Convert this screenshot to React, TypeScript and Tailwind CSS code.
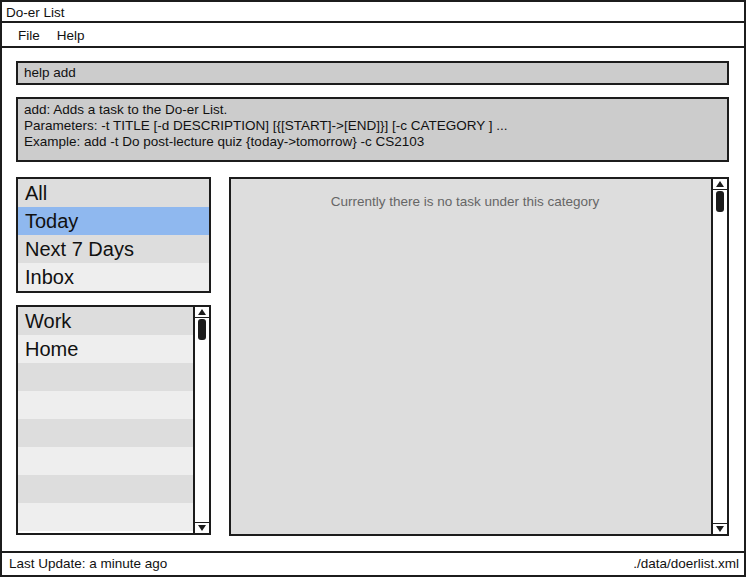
import React from "react";

const font = { fontFamily: '"Liberation Sans", Arial, sans-serif' };

function ScrollBar({ className = "" }: { className?: string }) {
  return (
    <div className={`flex w-[16px] flex-col border-l-2 border-[#1c1c1c] bg-white ${className}`}>
      {/* up arrow */}
      <div className="flex h-[11px] items-center justify-center border-b border-[#1c1c1c]">
        <svg width="8" height="6" viewBox="0 0 8 6">
          <polygon points="4,0 8,6 0,6" fill="#1c1c1c" />
        </svg>
      </div>
      {/* thumb */}
      <div className="mx-auto mt-[1px] h-[21px] w-[8px] rounded-[3px] bg-[#1c1c1c]" />
      <div className="flex-1" />
      {/* down arrow */}
      <div className="flex h-[11px] items-center justify-center border-t border-[#1c1c1c]">
        <svg width="8" height="6" viewBox="0 0 8 6">
          <polygon points="0,0 8,0 4,6" fill="#1c1c1c" />
        </svg>
      </div>
    </div>
  );
}

export default function App() {
  const filters = ["All", "Today", "Next 7 Days", "Inbox"];
  const categories = ["Work", "Home", "", "", "", "", "", ""];

  return (
    <div
      className="flex h-[577px] w-[746px] flex-col overflow-hidden border-2 border-[#1c1c1c] bg-white text-[#111]"
      style={font}
    >
      {/* Title */}
      <div className="h-[21px] border-b-2 border-[#1c1c1c] pl-[4px] pt-[2px] text-[13.5px] leading-[17px]">
        Do-er List
      </div>

      {/* Menu */}
      <div className="flex h-[25px] items-center gap-[17px] border-b-2 border-[#1c1c1c] pl-[16px] pt-[3px] text-[13.5px]">
        <span>File</span>
        <span>Help</span>
      </div>

      {/* Content */}
      <div className="flex flex-1 flex-col pl-[14px] pr-[15px] pt-[13px]">
        <div className="flex h-[24px] items-center border-2 border-[#1c1c1c] bg-[#cccccc] pl-[6px] text-[13.5px]">
          help add
        </div>

        <div className="mt-[12px] h-[65px] border-2 border-[#1c1c1c] bg-[#cccccc] pl-[6px] pt-[3px] text-[13.5px] leading-[16px]">
          <div>add: Adds a task to the Do-er List.</div>
          <div>Parameters: -t TITLE [-d DESCRIPTION] [{"{[START]->[END]}"}] [-c CATEGORY ] ...</div>
          <div>Example: add -t Do post-lecture quiz {"{today->tomorrow}"} -c CS2103</div>
        </div>

        <div className="mt-[15px] flex gap-[18px]">
          {/* Left column */}
          <div className="flex w-[195px] flex-col gap-[12px]">
            <div className="border-2 border-[#1c1c1c]">
              {filters.map((f, i) => (
                <div
                  key={f}
                  className={`flex h-[28px] items-center pl-[7px] text-[20px] ${
                    i === 1 ? "bg-[#8fb8ef]" : i === 3 ? "bg-[#eeeeee]" : "bg-[#dddddd]"
                  }`}
                >
                  {f}
                </div>
              ))}
            </div>

            <div className="flex h-[230px] overflow-hidden border-2 border-[#1c1c1c]">
              <div className="flex-1">
                {categories.map((c, i) => (
                  <div
                    key={i}
                    className={`flex h-[28px] items-center pl-[7px] text-[20px] ${
                      i % 2 === 0 ? "bg-[#dddddd]" : "bg-[#eeeeee]"
                    }`}
                  >
                    {c}
                  </div>
                ))}
              </div>
              <ScrollBar />
            </div>
          </div>

          {/* Task panel */}
          <div className="flex h-[359px] flex-1 border-2 border-[#1c1c1c] bg-[#dddddd]">
            <div className="flex-1 pr-[12px] pt-[13px] text-center text-[13.5px] text-[#666]">
              Currently there is no task under this category
            </div>
            <ScrollBar />
          </div>
        </div>
      </div>

      {/* Status */}
      <div className="flex h-[24px] items-center justify-between border-t-2 border-[#1c1c1c] pl-[7px] pr-[5px] text-[13.5px]">
        <span>Last Update: a minute ago</span>
        <span>./data/doerlist.xml</span>
      </div>
    </div>
  );
}
